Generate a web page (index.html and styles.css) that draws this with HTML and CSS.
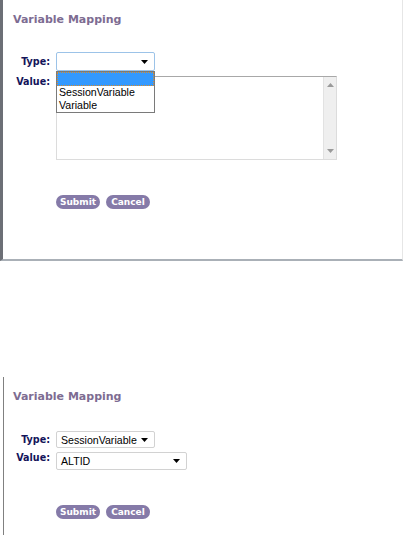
FILE: index.html
```html
<!DOCTYPE html>
<html>
<head>
<meta charset="utf-8">
<link rel="stylesheet" href="styles.css">
</head>
<body>
<div class="page">
  <section class="panel panel-top">
    <h2 class="title">Variable Mapping</h2>
    <div class="form">
      <label class="lbl lbl-type">Type:</label>
      <div class="ctl">
        <div class="select select-focus w98">
          <span class="sel-text"></span>
          <svg class="arrow" width="7" height="4" viewBox="0 0 7 4"><path d="M0 0H7L3.5 4Z" fill="#000"/></svg>
        </div>
        <ul class="menu">
          <li class="opt opt-active"></li>
          <li class="opt">SessionVariable</li>
          <li class="opt">Variable</li>
        </ul>
      </div>
      <label class="lbl lbl-value">Value:</label>
      <div class="ctl">
        <div class="textarea">
          <div class="scrollbar">
            <svg width="7" height="4" viewBox="0 0 7 4"><path d="M0 4H7L3.5 0Z" fill="#9a9a9a"/></svg>
            <svg width="7" height="4" viewBox="0 0 7 4"><path d="M0 0H7L3.5 4Z" fill="#9a9a9a"/></svg>
          </div>
        </div>
      </div>
    </div>
    <div class="buttons">
      <span class="btn">Submit</span>
      <span class="btn">Cancel</span>
    </div>
  </section>

  <section class="panel panel-bottom">
    <h2 class="title">Variable Mapping</h2>
    <div class="form form-b">
      <label class="lbl lbl-type-b">Type:</label>
      <div class="ctl">
        <div class="select w98">
          <span class="sel-text">SessionVariable</span>
          <svg class="arrow" width="7" height="4" viewBox="0 0 7 4"><path d="M0 0H7L3.5 4Z" fill="#000"/></svg>
        </div>
      </div>
      <label class="lbl lbl-value-b">Value:</label>
      <div class="ctl">
        <div class="select w130">
          <span class="sel-text">ALTID</span>
          <svg class="arrow" width="7" height="4" viewBox="0 0 7 4"><path d="M0 0H7L3.5 4Z" fill="#000"/></svg>
        </div>
      </div>
    </div>
    <div class="buttons buttons-b">
      <span class="btn">Submit</span>
      <span class="btn">Cancel</span>
    </div>
  </section>
</div>
</body>
</html>
```

FILE: styles.css
```css
html, body {
  margin: 0;
  padding: 0;
  background: #ffffff;
}
.page {
  width: 403px;
  height: 535px;
  display: flex;
  flex-direction: column;
  overflow: hidden;
}
.panel {
  box-sizing: border-box;
}
.panel-top {
  height: 261px;
  border-left: 3px solid #6c6f76;
  border-right: 1px solid #e6e6e6;
  border-bottom: 2px solid #aab0b7;
  padding: 12px 0 0 10px;
}
.panel-bottom {
  margin-top: 116px;
  margin-left: 3px;
  flex: 1;
  border-left: 1px solid #808080;
  padding: 12px 0 0 9px;
}
.title {
  margin: 0;
  font-family: "DejaVu Sans", Verdana, sans-serif;
  font-weight: bold;
  font-size: 11px;
  line-height: 16px;
  color: #7d6c92;
}
.form {
  display: grid;
  grid-template-columns: 37px auto;
  column-gap: 6px;
  row-gap: 5px;
  margin-top: 24px;
  align-items: start;
}
.form-b {
  margin-top: 26px;
  row-gap: 4px;
}
.lbl {
  font-family: "DejaVu Sans", Verdana, sans-serif;
  font-weight: bold;
  font-size: 9.6px;
  color: #14145a;
  text-align: right;
  white-space: nowrap;
  line-height: 12px;
}
.lbl-type { padding-top: 4px; }
.lbl-value { padding-top: 0; }
.lbl-type-b { padding-top: 3px; }
.lbl-value-b { padding-top: 0; }
.ctl {
  position: relative;
}
.select {
  box-sizing: border-box;
  height: 17px;
  border: 1px solid #d2d2d2;
  border-radius: 2px;
  background: #fff;
  display: flex;
  align-items: center;
  justify-content: space-between;
  padding: 0 6px 0 4px;
  font-family: "Liberation Sans", Arial, sans-serif;
  font-size: 10.6px;
  color: #000;
}
.select.w130 {
  height: 18px;
}
.select-focus {
  height: 19px;
  border-color: #9cc3e8;
}
.w98 { width: 99px; }
.w130 { width: 131px; }
.menu {
  position: absolute;
  left: 0;
  top: 19px;
  width: 99px;
  height: 42px;
  box-sizing: border-box;
  margin: 0;
  padding: 0;
  list-style: none;
  background: #fff;
  border: 1px solid #7a7a7a;
  font-family: "Liberation Sans", Arial, sans-serif;
  font-size: 10.6px;
  color: #000;
  z-index: 2;
}
.opt {
  height: 13px;
  line-height: 13px;
  padding-left: 2px;
}
.opt-active {
  height: 14px;
  box-sizing: border-box;
  background: #3399ff;
  border: 1px dotted #d88b2a;
}
.textarea {
  box-sizing: border-box;
  width: 281px;
  height: 84px;
  border: 1px solid #dcdcdc;
  border-top-color: #a8a8a8;
  background: #fff;
  display: flex;
  justify-content: flex-end;
}
.scrollbar {
  width: 13px;
  background: #efefef;
  border-left: 1px solid #e2e2e2;
  display: flex;
  flex-direction: column;
  justify-content: space-between;
  align-items: center;
  padding: 6px 0 6px;
  box-sizing: border-box;
}
.buttons {
  display: flex;
  gap: 6px;
  margin-top: 35px;
  padding-left: 43px;
}
.buttons-b {
  margin-top: 35px;
}
.btn {
  box-sizing: border-box;
  width: 44px;
  height: 14px;
  border-radius: 7px;
  background: #857aa8;
  color: #fff;
  font-family: "DejaVu Sans", Verdana, sans-serif;
  font-weight: bold;
  font-size: 9px;
  line-height: 14px;
  text-align: center;
}
```
